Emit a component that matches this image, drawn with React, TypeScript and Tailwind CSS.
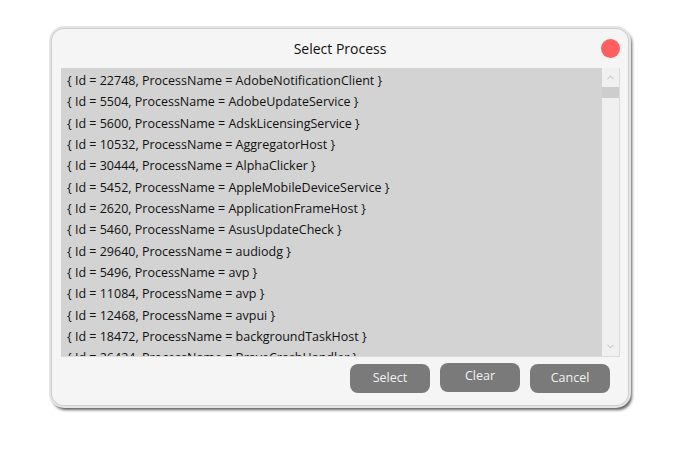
import { ChevronUp, ChevronDown } from "lucide-react"

const processes = [
  { id: 22748, name: "AdobeNotificationClient" },
  { id: 5504, name: "AdobeUpdateService" },
  { id: 5600, name: "AdskLicensingService" },
  { id: 10532, name: "AggregatorHost" },
  { id: 30444, name: "AlphaClicker" },
  { id: 5452, name: "AppleMobileDeviceService" },
  { id: 2620, name: "ApplicationFrameHost" },
  { id: 5460, name: "AsusUpdateCheck" },
  { id: 29640, name: "audiodg" },
  { id: 5496, name: "avp" },
  { id: 11084, name: "avp" },
  { id: 12468, name: "avpui" },
  { id: 18472, name: "backgroundTaskHost" },
  { id: 26424, name: "BraveCrashHandler" },
]

const buttons = ["Select", "Clear", "Cancel"]

export default function App() {
  return (
    <div className="w-[685px] h-[461px] bg-white pl-[52px] pt-[29px] font-['Open_Sans',sans-serif]">
      <div className="w-[576px] h-[376px] rounded-[12px] bg-[#f5f5f5] flex flex-col shadow-[0_0_0_1px_#cfcfcf,0_0_0_3px_#e4e4e4,2px_3px_3px_2px_#5f5f5f]">
        {/* Header */}
        <div className="relative h-[39px] flex items-center justify-center">
          <span className="text-[14px] text-[#111]">Select Process</span>
          <div className="absolute right-[8px] top-[10px] w-[19px] h-[19px] rounded-full bg-[#ff5f5f]" />
        </div>

        {/* List */}
        <div className="ml-[9px] w-[559px] h-[289px] flex border border-[#dcdcdc] border-l-0 border-t-0">
          <div className="flex-1 bg-[#d3d3d3] overflow-hidden pl-[6px] pt-[2px]">
            {processes.map((p) => (
              <div key={p.id} className="h-[21.35px] leading-[21.35px] text-[12.5px] text-[#111] whitespace-nowrap">
                {`{ Id = ${p.id}, ProcessName = ${p.name} }`}
              </div>
            ))}
          </div>
          <div className="w-[17px] bg-[#f0f0f0] flex flex-col">
            <div className="h-[19px] flex items-center justify-center">
              <ChevronUp className="w-[11px] h-[11px] text-[#a0a0a0]" strokeWidth={1.5} />
            </div>
            <div className="h-[11px] bg-[#cdcdcd]" />
            <div className="flex-1" />
            <div className="h-[19px] flex items-center justify-center">
              <ChevronDown className="w-[11px] h-[11px] text-[#a0a0a0]" strokeWidth={1.5} />
            </div>
          </div>
        </div>

        {/* Buttons */}
        <div className="flex justify-end gap-[10px] pr-[18px] pt-[7px]">
          {buttons.map((b) => (
            <button
              key={b}
              className={`w-[80px] h-[29px] rounded-[8px] bg-[#7a7a7a] text-[12.5px] text-[#f2f2f2] flex items-center justify-center ${
                b === "Clear" ? "-mt-[1px] pb-[3px]" : ""
              }`}
            >
              {b}
            </button>
          ))}
        </div>
      </div>
    </div>
  )
}
